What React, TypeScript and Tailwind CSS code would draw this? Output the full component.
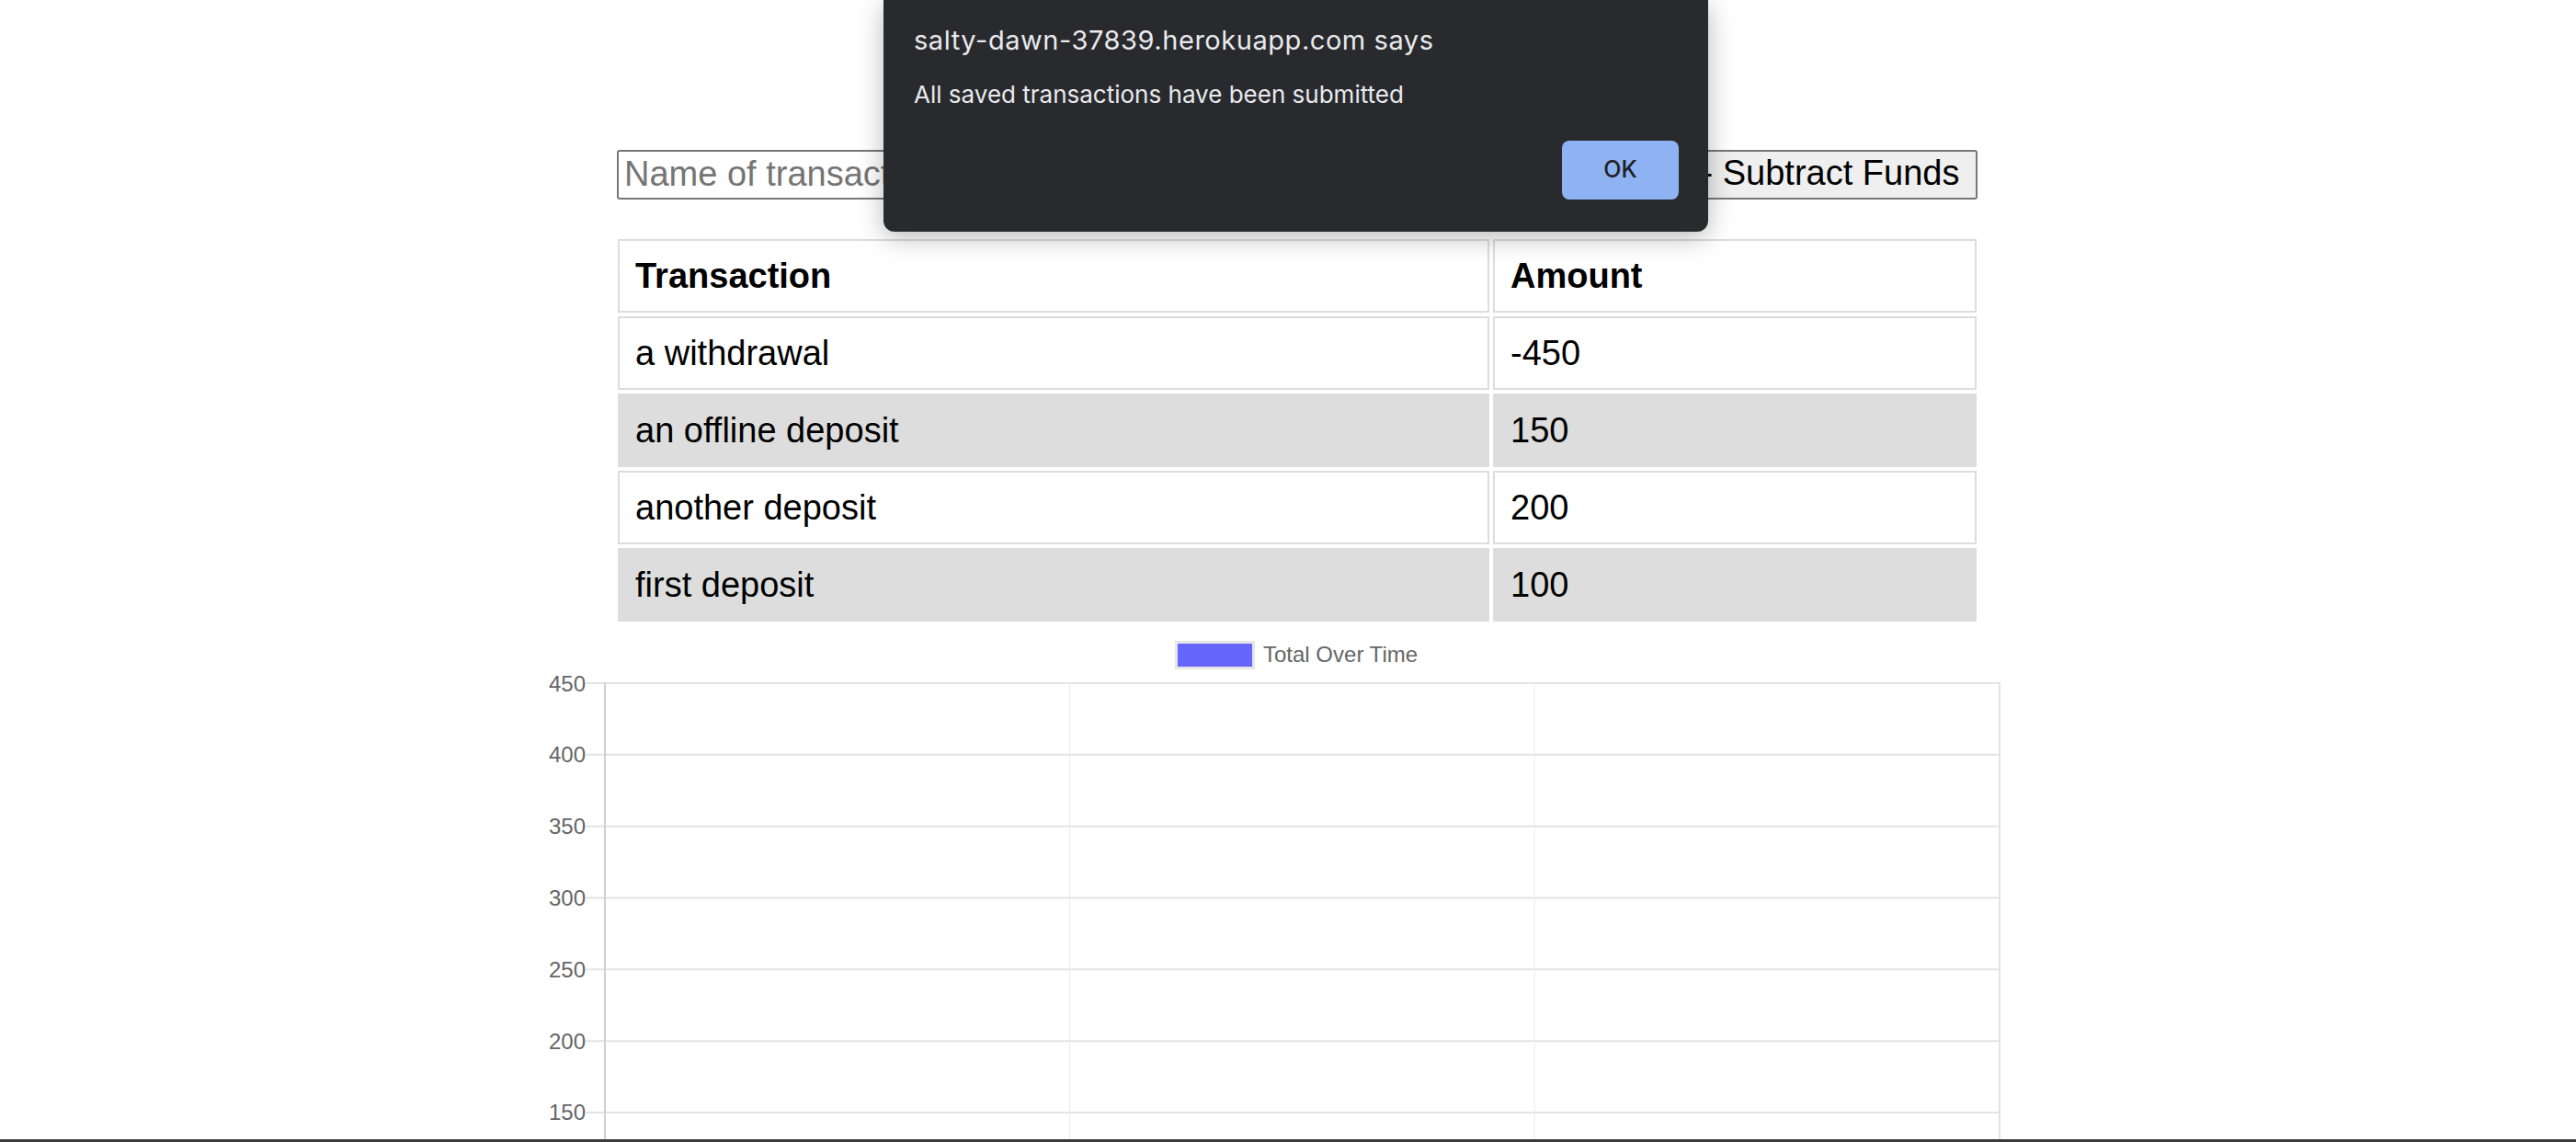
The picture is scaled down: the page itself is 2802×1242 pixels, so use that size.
import React from "react";

type Row = { name: string; amount: number };

const rows: Row[] = [
  { name: "a withdrawal", amount: -450 },
  { name: "an offline deposit", amount: 150 },
  { name: "another deposit", amount: 200 },
  { name: "first deposit", amount: 100 },
];

const ticks = [450, 400, 350, 300, 250, 200, 150];

const Chart: React.FC = () => {
  const step = 77.83;
  return (
    <svg width="1590" height="559" className="ml-[590px] block">
      <rect x="689.5" y="18.5" width="84" height="28" fill="#6666ff" stroke="#e6e6e6" strokeWidth="3" />
      <text x="784" y="40" fontSize="24" fill="#666">Total Over Time</text>
      {ticks.map((t, i) => {
        const y = 63 + i * step;
        return (
          <g key={t}>
            <line x1="47" x2="1586" y1={y} y2={y} stroke="#e4e4e4" strokeWidth="2" />
            <text x="47" y={y + 8.5} fontSize="24" fill="#666" textAnchor="end">{t}</text>
          </g>
        );
      })}
      <line x1="573.5" x2="573.5" y1="62" y2="559" stroke="#ececec" strokeWidth="1" />
      <line x1="1079" x2="1079" y1="62" y2="559" stroke="#ececec" strokeWidth="1" />
      <line x1="1585" x2="1585" y1="62" y2="559" stroke="#e2e2e2" strokeWidth="2" />
      <line x1="68" x2="68" y1="62" y2="559" stroke="#cfcfcf" strokeWidth="2" />
    </svg>
  );
};

const cell = "h-[80px] border-2 border-[#dddddd] pl-[17px] pr-[18px] flex items-center text-[38px]";

const App: React.FC = () => {
  return (
    <div className="w-[2802px] h-[1242px] bg-white flex flex-col overflow-hidden relative font-['Liberation_Sans',Arial,sans-serif] text-black">
      <div className="flex-1 overflow-hidden">
        <div className="h-[163px]"></div>
        <div className="ml-[671px] w-[1480px] h-[54px] flex gap-[4px]">
          <input
            type="text"
            placeholder="Name of transaction"
            className="w-[460px] h-full border-2 border-[#767676] rounded-[3px] px-[6px] pb-[2px] text-[38px] placeholder:text-[#757575] outline-none"
          />
          <input
            type="number"
            placeholder="Transaction amount"
            className="flex-1 min-w-0 h-full border-2 border-[#767676] rounded-[3px] px-[6px] pb-[2px] text-[38px] placeholder:text-[#757575] outline-none"
          />
          <button className="h-full border-2 border-[#767676] rounded-[3px] bg-[#efefef] px-[16px] pb-[5px] text-[38px] leading-none whitespace-nowrap">+ Add Funds</button>
          <button className="w-[320px] h-full border-2 border-[#767676] rounded-[3px] bg-[#efefef] px-[16px] pb-[5px] text-[38px] leading-none whitespace-nowrap">- Subtract Funds</button>
        </div>
        <div className="mt-[43px] ml-[672px] w-[1478px] grid grid-cols-[948px_526px] gap-[4px]">
          <div className={cell + " font-bold"}>Transaction</div>
          <div className={cell + " font-bold"}>Amount</div>
          {rows.map((r, i) => (
            <React.Fragment key={r.name}>
              <div className={i % 2 === 1 ? cell + " bg-[#dddddd]" : cell}>{r.name}</div>
              <div className={i % 2 === 1 ? cell + " bg-[#dddddd]" : cell}>{r.amount}</div>
            </React.Fragment>
          ))}
        </div>
        <div className="mt-[4px]">
          <Chart />
        </div>
      </div>
      <div className="h-[3px] bg-[#3a3a3c]"></div>

      <div className="absolute top-0 left-[961px] w-[897px] h-[252px] bg-[#292a2d] rounded-b-[12px] shadow-[0_6px_28px_rgba(0,0,0,0.28)] font-['Inter',sans-serif] text-[#e8eaed] px-[33px] pt-[27px]">
        <p className="text-[29px] leading-[34px] tracking-[0.55px]">salty-dawn-37839.herokuapp.com says</p>
        <p className="mt-[27px] text-[26px] leading-[30px]">All saved transactions have been submitted</p>
        <div className="flex justify-end mt-[35px]">
          <button className="w-[127px] h-[64px] -mr-[1px] rounded-[8px] bg-[#8fb2f2] text-[#202124] text-[25px] font-medium">OK</button>
        </div>
      </div>
    </div>
  );
};

export default App;
